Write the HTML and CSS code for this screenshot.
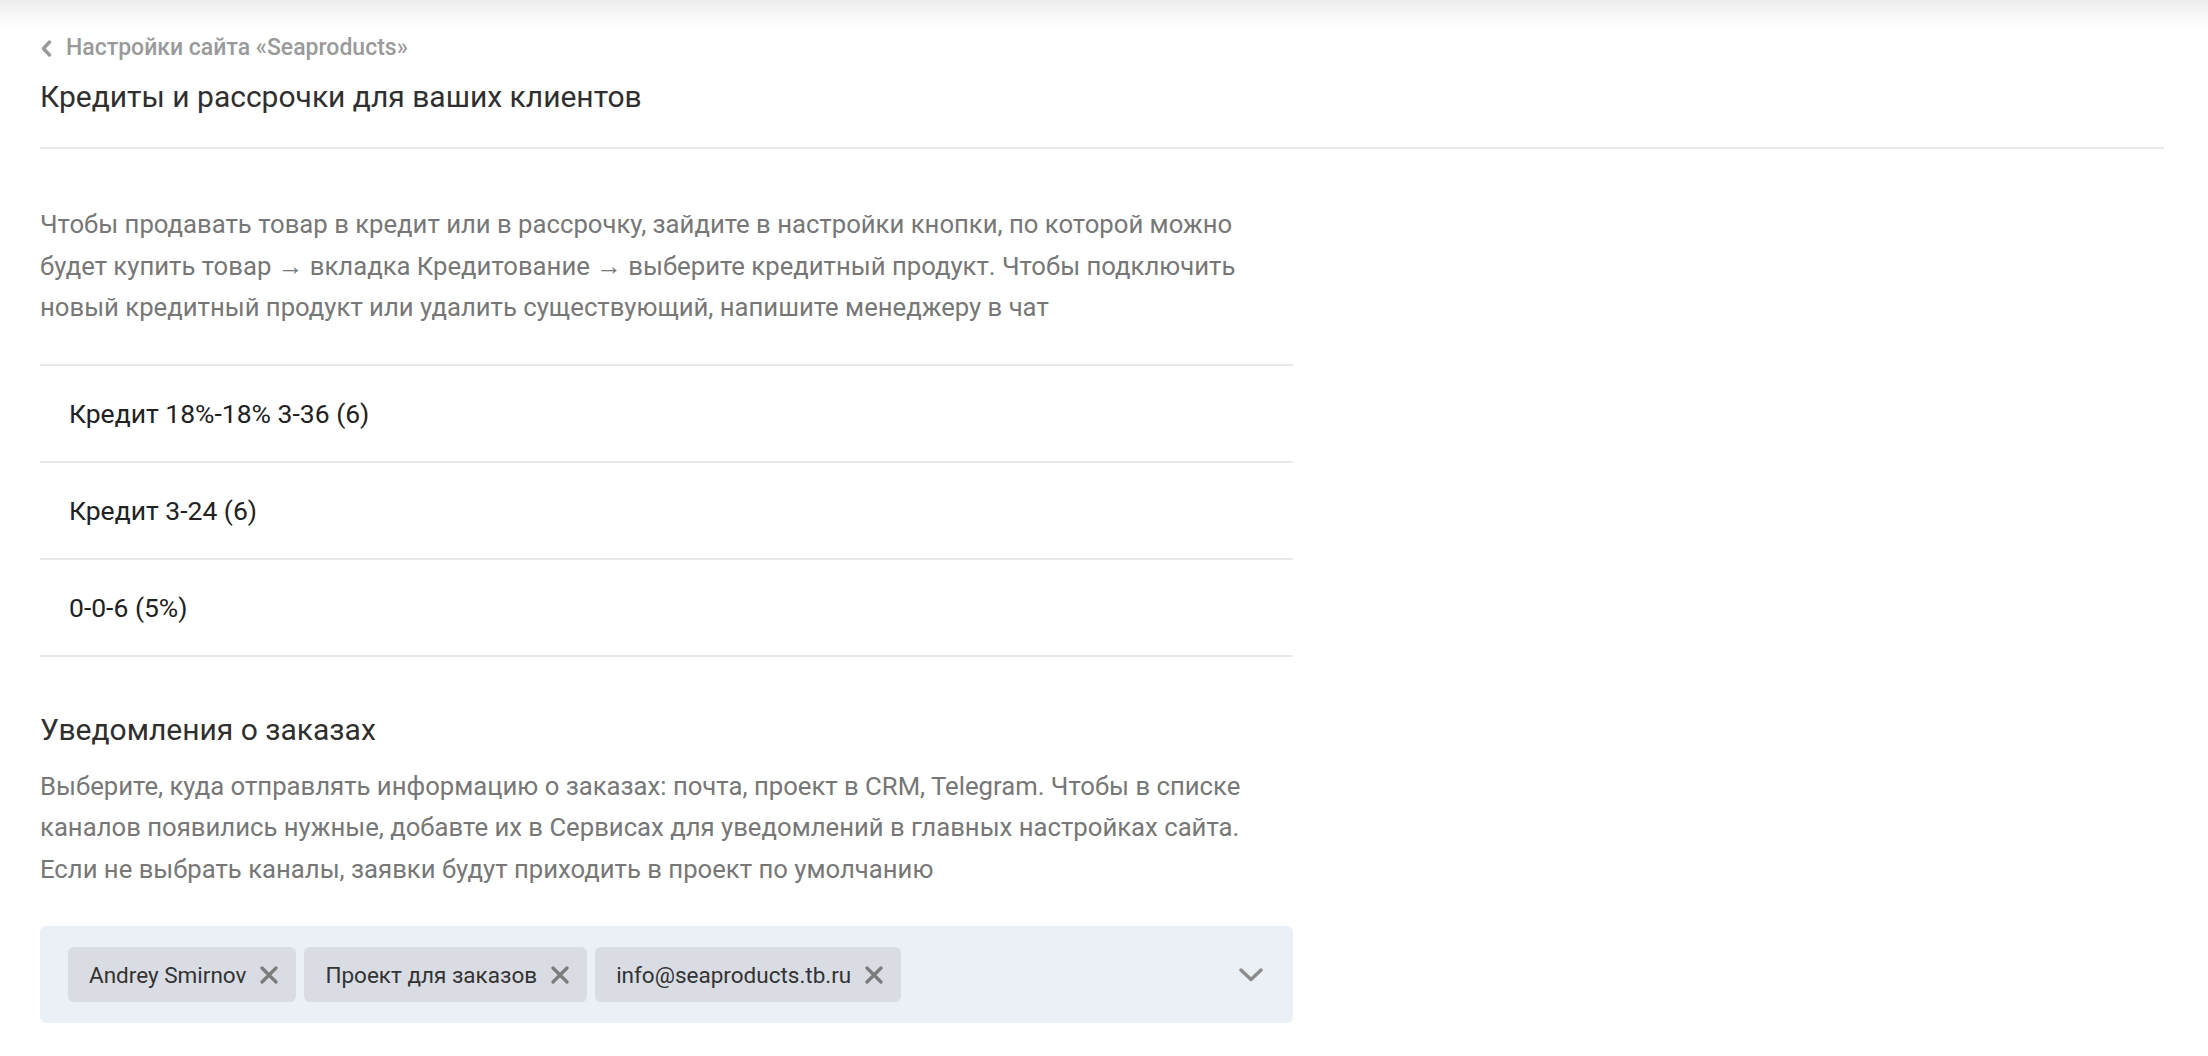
FILE: index.html
```html
<!DOCTYPE html>
<html lang="ru">
<head>
<meta charset="utf-8">
<title>Кредиты и рассрочки</title>
<link rel="stylesheet" href="styles.css">
</head>
<body>
<div class="page">
  <header class="top">
    <a class="crumb" href="#">
      <svg class="crumb-ico" width="11" height="17" viewBox="0 0 11 17"><path d="M8.5 2 L2.5 8.5 L8.5 15" fill="none" stroke="#9a9a9a" stroke-width="3.4" stroke-linecap="round" stroke-linejoin="round"/></svg>
      <span>Настройки сайта «Seaproducts»</span>
    </a>
    <h1 class="title">Кредиты и рассрочки для ваших клиентов</h1>
  </header>
  <div class="rule"></div>

  <section class="block">
    <p class="desc desc-first">Чтобы продавать товар в кредит или в рассрочку, зайдите в настройки кнопки, по которой можно будет купить товар → вкладка Кредитование → выберите кредитный продукт. Чтобы подключить новый кредитный продукт или удалить существующий, напишите менеджеру в чат</p>
    <ul class="list">
      <li class="row">Кредит 18%-18% 3-36 (6)</li>
      <li class="row">Кредит 3-24 (6)</li>
      <li class="row">0-0-6 (5%)</li>
    </ul>

    <h2 class="subtitle">Уведомления о заказах</h2>
    <p class="desc">Выберите, куда отправлять информацию о заказах: почта, проект в CRM, Telegram. Чтобы в списке каналов появились нужные, добавте их в Сервисах для уведомлений в главных настройках сайта. Если не выбрать каналы, заявки будут приходить в проект по умолчанию</p>

    <div class="select">
      <div class="chips">
        <span class="chip">Andrey Smirnov<svg class="x" width="18" height="18" viewBox="0 0 18 18"><path d="M2 2 L16 16 M16 2 L2 16" stroke="#7b7b7b" stroke-width="3.2" stroke-linecap="round"/></svg></span>
        <span class="chip">Проект для заказов<svg class="x" width="18" height="18" viewBox="0 0 18 18"><path d="M2 2 L16 16 M16 2 L2 16" stroke="#7b7b7b" stroke-width="3.2" stroke-linecap="round"/></svg></span>
        <span class="chip">info@seaproducts.tb.ru<svg class="x" width="18" height="18" viewBox="0 0 18 18"><path d="M2 2 L16 16 M16 2 L2 16" stroke="#7b7b7b" stroke-width="3.2" stroke-linecap="round"/></svg></span>
      </div>
      <svg class="caret" width="24" height="14" viewBox="0 0 24 14"><path d="M2 2 L12 11.5 L22 2" fill="none" stroke="#8c8c8c" stroke-width="3.4" stroke-linecap="round" stroke-linejoin="round"/></svg>
    </div>
  </section>
</div>
</body>
</html>
```
FILE: styles.css
```css
* { box-sizing: border-box; }
html, body { margin: 0; padding: 0; background: #fff; }
body {
  font-family: Roboto, "Liberation Sans", Arial, sans-serif;
  color: #333;
}
.page {
  background: linear-gradient(to bottom, #ececec 0, #f7f7f7 14px, #ffffff 30px);
  padding: 0 44px 40px 40px;
  min-height: 1056px;
}
.top { padding-top: 33px; }
.crumb {
  display: flex;
  align-items: center;
  gap: 14px;
  height: 30px;
  color: #9a9a9a;
  text-decoration: none;
  font-size: 23px;
  font-weight: 500;
  line-height: 30px;
}
.crumb-ico { display: block; margin-left: 1px; }
.title {
  margin: 14px 0 0;
  font-size: 30px;
  font-weight: 400;
  line-height: 40px;
  color: #2f2f2f;
}
.rule {
  margin-top: 30px;
  height: 2px;
  background: #e9e9e9;
}
.block { width: 1253px; }
.desc {
  margin: 16px 0 0;
  max-width: 1215px;
  font-size: 25.7px;
  line-height: 41.5px;
  color: #777;
}
.desc-first { margin-top: 55px; }
.list {
  list-style: none;
  margin: 35px 0 0;
  padding: 0;
  border-top: 2px solid #e9e9e9;
}
.row {
  display: flex;
  align-items: center;
  height: 97px;
  padding-left: 29px;
  border-bottom: 2px solid #e9e9e9;
  font-size: 26.5px;
  color: #222;
}
.subtitle {
  margin: 53px 0 0;
  font-size: 30px;
  font-weight: 400;
  line-height: 40px;
  color: #2f2f2f;
}
.select {
  margin-top: 36px;
  height: 97px;
  background: #ebeff6;
  border-radius: 6px;
  display: flex;
  align-items: center;
  justify-content: space-between;
  padding: 0 30px 0 28px;
}
.chips { display: flex; gap: 8px; }
.chip {
  display: inline-flex;
  align-items: center;
  gap: 14px;
  height: 55px;
  padding: 0 18px 0 21px;
  background: #d9dce3;
  border-radius: 6px;
  font-size: 22.5px;
  color: #333;
}
.x { display: block; }
.caret { display: block; }
```
